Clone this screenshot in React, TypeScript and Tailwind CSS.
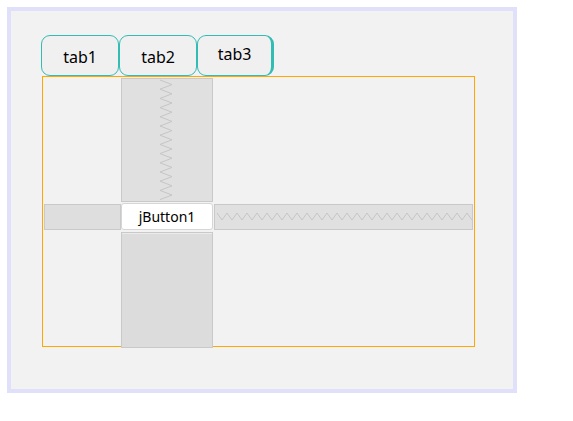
const ZigV = () => {
  const pts: string[] = []
  for (let i = 0; i <= 26; i++) {
    pts.push(`${i % 2 === 0 ? 38 : 50},${1 + i * 4.6}`)
  }
  return (
    <svg className="absolute inset-0" width="90" height="122">
      <polyline points={pts.join(' ')} fill="none" stroke="#c6c6c6" strokeWidth="1" />
    </svg>
  )
}

const ZigH = () => {
  const pts: string[] = []
  for (let i = 0; i <= 51; i++) {
    pts.push(`${2 + i * 5},${i % 2 === 0 ? 8 : 15}`)
  }
  return (
    <svg className="absolute inset-0" width="258" height="24">
      <polyline points={pts.join(' ')} fill="none" stroke="#c6c6c6" strokeWidth="1" />
    </svg>
  )
}

const Tab = ({ label, last }: { label: string; last?: boolean }) => (
  <div
    className={
      last
        ? 'h-[41px] w-[77px] rounded-[9px] border-[1.5px] border-r-[3px] border-[#32bcb4] bg-[#f0f0f0] flex items-center justify-center pb-[3px] text-[16px] text-black'
        : 'h-[41px] w-[78px] rounded-[9px] border-[1.5px] border-[#32bcb4] bg-[#f0f0f0] flex items-center justify-center pt-[2px] text-[16px] text-black'
    }
  >
    {label}
  </div>
)

export default function App() {
  return (
    <div className="w-[573px] h-[421px] bg-white p-[7px]" style={{ fontFamily: '"Noto Sans", "Open Sans", sans-serif' }}>
      <div className="w-[510px] h-[386px] border-4 border-[#e0e0fa] bg-[#f2f2f2] pt-[24px] pl-[30px]">
        <div className="flex">
          <Tab label="tab1" />
          <Tab label="tab2" />
          <Tab label="tab3" last />
        </div>
        <div className="ml-[1px] w-[433px] h-[271px] border border-[#ffa800] grid grid-cols-[77px_92px_1fr] grid-rows-[126px_27px_1fr] pl-[1px] pt-[1px]">
          <div />
          <div className="relative w-[92px] h-[124px] bg-[#e0e0e0] border border-[#c9c9c9]">
            <ZigV />
          </div>
          <div />
          <div className="bg-[#dedede] border border-[#c9c9c9] h-[26px]" />
          <div className="bg-white border border-[#d6d6d6] rounded-[3px] h-[27px] -mt-[1px] flex items-center justify-center text-[14px] text-black">
            jButton1
          </div>
          <div className="relative ml-[1px] mr-[1px] bg-[#e0e0e0] border border-[#c9c9c9] h-[26px]">
            <ZigH />
          </div>
          <div />
          <div className="w-[92px] h-[116px] mt-[1px] bg-[#dcdcdc] border border-[#c9c9c9] shadow-[inset_0_1px_0_#ebebeb]" />
          <div />
        </div>
      </div>
    </div>
  )
}
